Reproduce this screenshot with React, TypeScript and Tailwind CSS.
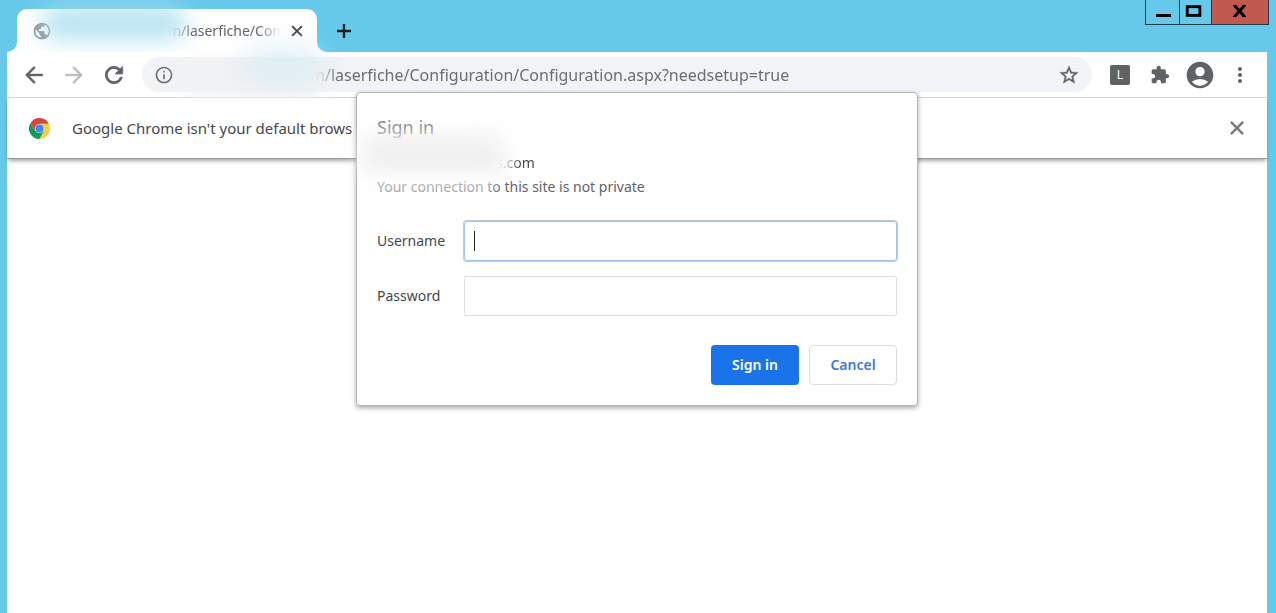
import { useState } from 'react';
import {
  MdAccountCircle,
  MdArrowBack,
  MdArrowForward,
  MdExtension,
  MdInfoOutline,
  MdMoreVert,
  MdPublic,
  MdRefresh,
  MdStarBorder,
} from 'react-icons/md';

function ChromeLogo() {
  return (
    <svg viewBox="0 0 48 48" className="size-[21px]" aria-hidden="true">
      <path d="M24 13 H45.3 A24 24 0 0 1 24 48 L33.5 29.5 Z" fill="#ffcd40" />
      <path d="M14.5 29.5 L3.2 12 A24 24 0 0 0 24 48 L33.5 29.5 Z" fill="#0f9d58" />
      <path d="M3.2 12 A24 24 0 0 1 45.3 13 H24 L14.5 29.5 Z" fill="#db4437" />
      <circle cx="24" cy="24" r="10.5" fill="#d9e2ee" />
      <circle cx="24" cy="24" r="9" fill="#4285f4" />
    </svg>
  );
}

function CloseIcon({ className }: { className: string }) {
  return (
    <svg viewBox="0 0 18 18" className={className} fill="none" stroke="currentColor" strokeWidth="2.2" aria-hidden="true">
      <path d="M3.500 3.500l11 11M14.500 3.500l-11 11" />
    </svg>
  );
}

function WindowControls() {
  return (
    <div className="mr-[7px] flex h-[25px] border border-t-0 border-[#26394a]">
      <button aria-label="Minimize" className="flex w-[34px] justify-center border-r border-[#26394a]">
        <svg viewBox="0 0 33 24" className="h-6 w-[33px]"><path d="M10 15.5h15" stroke="#000" strokeWidth="3" /></svg>
      </button>
      <button aria-label="Maximize" className="flex w-8 justify-center border-r border-[#26394a]">
        <svg viewBox="0 0 32 24" className="h-6 w-8"><rect x="7.5" y="6.5" width="13" height="9" fill="none" stroke="#000" strokeWidth="3" /></svg>
      </button>
      <button aria-label="Close window" className="flex w-14 justify-center bg-[#c1594f]">
        <svg viewBox="0 0 56 24" className="h-6 w-14"><path d="M22.5 5.5l10 11M32.5 5.5l-10 11" stroke="#000" strokeWidth="3" /><path d="M21 5.5h4M30 5.5h4M21 16.5h4M30 16.5h4" stroke="#000" /></svg>
      </button>
    </div>
  );
}

function TabStrip() {
  return (
    <div className="flex h-[52px] items-start justify-between">
      <div className="flex h-full items-end pl-[7px]">
        <div className="size-2.5 bg-white"><div className="size-full rounded-br-[10px] bg-[#66c9ea]" /></div>
        <div className="relative flex h-[43px] w-[300px] items-center rounded-t-[10px] bg-white pr-3 pl-[15px] text-[#5f6368]">
          <MdPublic className="size-5 opacity-70" />
          <span className="ml-[116px] text-sm whitespace-nowrap [mask-image:linear-gradient(to_right,transparent,black_20%,black_80%,transparent)]">
            m/laserfiche/Con
          </span>
          <button aria-label="Close tab" className="ml-auto">
            <CloseIcon className="size-4 text-[#3c4043]" />
          </button>
          <div className="absolute -top-1 left-6 h-9 w-[145px] rounded-2xl bg-[#a9e0ef]/80 blur-[11px]" />
        </div>
        <div className="size-2.5 bg-white"><div className="size-full rounded-bl-[10px] bg-[#66c9ea]" /></div>
        <button aria-label="New tab" className="mb-3 ml-2">
          <svg viewBox="0 0 18 18" className="size-[18px]"><path d="M9 2v14M2 9h14" stroke="#202124" strokeWidth="2.4" /></svg>
        </button>
      </div>
      <WindowControls />
    </div>
  );
}

function Toolbar() {
  const [url, setUrl] = useState('m/laserfiche/Configuration/Configuration.aspx?needsetup=true');

  return (
    <div className="flex h-[46px] items-center border-b border-[#d5d7da] bg-white pl-3.5 text-[#5f6368]">
      <button aria-label="Back" className="mr-3.5"><MdArrowBack className="size-[26px] stroke-[0.3] [&>path[fill=none]]:stroke-none" /></button>
      <button aria-label="Forward" className="mr-3.5 text-[#bcbec1]"><MdArrowForward className="size-[26px] stroke-[0.3] [&>path[fill=none]]:stroke-none" /></button>
      <button aria-label="Reload" className="mr-[15px]"><MdRefresh className="size-[26px] stroke-[0.7] [&>path[fill=none]]:stroke-none" /></button>
      <div className="relative flex h-[35px] flex-1 items-center rounded-full bg-[#f1f3f4] px-3">
        <button aria-label="Site information"><MdInfoOutline className="size-5 opacity-90" /></button>
        <input
          aria-label="Address"
          value={url}
          onChange={(e) => setUrl(e.target.value)}
          className="ml-[136px] h-full min-w-0 flex-1 bg-transparent text-base text-[#6b6e73] outline-none [mask-image:linear-gradient(to_right,transparent,black_28px)]"
        />
        <button aria-label="Bookmark this page"><MdStarBorder className="size-[22px] stroke-[0.4] [&>path[fill=none]]:stroke-none" /></button>
        <div className="absolute top-1 left-10 h-9 w-[140px] rounded-2xl bg-[#f1f2f4] blur-[8px]" />
        <div className="absolute -top-3 left-[100px] h-10 w-[80px] rounded-full bg-[#d3ebf3]/60 blur-[12px]" />
      </div>
      <button aria-label="Laserfiche extension" className="ml-[18px] flex size-5 items-center justify-center rounded-xs bg-[#606265] text-xs text-white">L</button>
      <button aria-label="Extensions" className="ml-5"><MdExtension className="size-5" /></button>
      <button aria-label="Profile" className="ml-3.5"><MdAccountCircle className="size-8" /></button>
      <button aria-label="Menu" className="mr-[15px] ml-3"><MdMoreVert className="size-6" /></button>
    </div>
  );
}

function InfoBar() {
  return (
    <div className="relative flex h-[61px] items-center border-b border-[#979797] bg-white pr-5 pl-[22px] shadow-[0_3px_4px_-1px_rgba(0,0,0,0.35)]">
      <ChromeLogo />
      <span className="ml-[22px] text-[15px] text-[#46474b]">Google Chrome isn't your default brows</span>
      <button aria-label="Dismiss" className="ml-auto"><CloseIcon className="size-5 text-[#77797d]" /></button>
    </div>
  );
}

function SignInDialog() {
  return (
    <form
      role="dialog"
      aria-labelledby="sign-in-title"
      onSubmit={(e) => e.preventDefault()}
      className="absolute top-10 left-1/2 w-[562px] -translate-x-1/2 rounded-[4px] border border-[#b4b5b7] bg-white px-5 pt-[22px] pb-5 text-[#45474b] shadow-[0_2px_5px_rgba(0,0,0,0.35)]"
    >
      <h1 id="sign-in-title" className="text-lg leading-6 text-[#76797d]">Sign in</h1>
      <p className="mt-3 ml-[119px] text-sm leading-6 [mask-image:linear-gradient(to_right,transparent,black_24px)]">s.com</p>
      <p className="text-sm leading-6 text-[#5f6368]">Your connection to this site is not private</p>
      <div className="absolute top-10 left-1 h-11 w-[145px] rounded-2xl bg-[#f1f1f1] blur-[10px]" />
      <div className="absolute top-20 left-3 h-7 w-[125px] bg-white/40 blur-[6px]" />

      <div className="mt-[22px] grid grid-cols-[87px_1fr] items-center gap-y-[15px] text-sm">
        <label htmlFor="username">Username</label>
        <div className="relative">
          <input id="username" type="text" className="block h-10 w-full rounded-[3px] border border-[#a3c2ee] px-2.5 caret-transparent ring-1 ring-[#b3cdf2] outline-none" />
          <span className="absolute top-2.5 left-2.5 h-5 w-px bg-[#202124]" />
        </div>
        <label htmlFor="password">Password</label>
        <input id="password" type="password" className="h-10 w-full rounded-[3px] border border-[#dedfe1] px-2.5 outline-none" />
      </div>

      <div className="mt-[29px] flex justify-end gap-2.5 text-sm font-semibold">
        <button type="submit" className="h-10 w-[88px] rounded-[4px] bg-[#1a73e8] text-white">Sign in</button>
        <button type="button" className="h-10 w-[88px] rounded-[4px] border border-[#dadce0] text-[#3f79d8]">Cancel</button>
      </div>
    </form>
  );
}

export default function App() {
  return (
    <div className="flex min-h-screen flex-col bg-[#66c9ea] font-['Noto_Sans',sans-serif]">
      <TabStrip />
      <div className="relative mr-[9px] ml-[7px] flex flex-1 flex-col bg-white">
        <Toolbar />
        <InfoBar />
        <main className="flex-1" />
        <SignInDialog />
      </div>
    </div>
  );
}
